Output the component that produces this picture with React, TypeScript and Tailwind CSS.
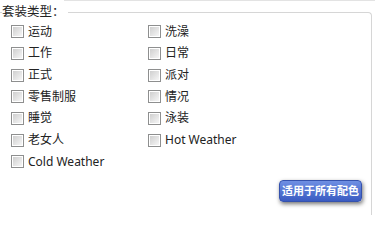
import { useState } from "react";

const SUIT_TYPES = [
  "运动",
  "洗澡",
  "工作",
  "日常",
  "正式",
  "派对",
  "零售制服",
  "情况",
  "睡觉",
  "泳装",
  "老女人",
  "Hot Weather",
  "Cold Weather",
];

function Checkbox({ label, checked, onToggle }: { label: string; checked: boolean; onToggle: () => void }) {
  return (
    <label className="flex h-[21.67px] cursor-pointer items-center gap-[4px]" onClick={onToggle}>
      <span className="flex h-[13px] w-[13px] shrink-0 items-center justify-center border border-[#8e8f8f] bg-white p-px">
        <span className="h-full w-full bg-linear-to-br from-[#cfcfcf] to-[#f6f6f6]">
          {checked ? <span className="block text-center text-[9px] leading-[9px] text-[#222]">✓</span> : null}
        </span>
      </span>
      <span className="whitespace-nowrap text-[12px] leading-[14px] text-[#222]">{label}</span>
    </label>
  );
}

export default function App() {
  const [selected, setSelected] = useState<string[]>([]);

  function toggle(name: string) {
    setSelected((prev) => (prev.includes(name) ? prev.filter((n) => n !== name) : [...prev, name]));
  }

  return (
    <div className="h-[215px] w-[375px] overflow-hidden bg-white font-['Noto_Sans','Noto_Sans_CJK_SC',sans-serif]">
      <div className="ml-[64px] h-px bg-[#e3e3e3]" />
      <fieldset className="mt-[2px] w-[372px] rounded-tr-[4px] border-t border-r border-[#d6d6d6] pl-[2px]">
        <legend className="pr-[3px] text-[12.5px] leading-[18px] text-[#222]">套装类型：</legend>
        <div className="ml-[9px] grid grid-cols-[137px_1fr]">
          {SUIT_TYPES.map((name) => (
            <Checkbox key={name} label={name} checked={selected.includes(name)} onToggle={() => toggle(name)} />
          ))}
        </div>
        <div className="mt-[7px] flex justify-end pr-[9px] pb-[60px]">
          <button
            type="button"
            className="h-[22px] w-[83px] rounded-[4px] border border-[#3552ad] bg-linear-to-b from-[#6f8fe3] to-[#3a5bc2] text-[11px] font-bold leading-[20px] text-white shadow-[1px_2px_4px_rgba(0,0,0,0.55)]"
          >
            适用于所有配色
          </button>
        </div>
      </fieldset>
    </div>
  );
}
